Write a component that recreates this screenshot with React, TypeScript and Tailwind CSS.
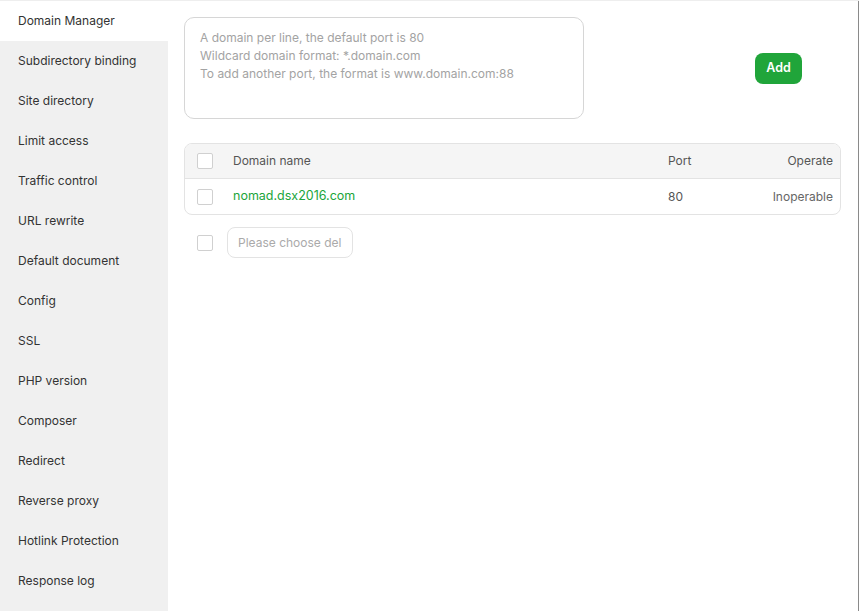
import React from "react";

// 站点设置弹窗 - 域名管理页
const menu = [
  "Domain Manager",
  "Subdirectory binding",
  "Site directory",
  "Limit access",
  "Traffic control",
  "URL rewrite",
  "Default document",
  "Config",
  "SSL",
  "PHP version",
  "Composer",
  "Redirect",
  "Reverse proxy",
  "Hotlink Protection",
  "Response log",
];

function Checkbox() {
  return <span className="block h-4 w-4 shrink-0 rounded-[2px] border border-[#d0d0d0] bg-white" />;
}

export default function App() {
  return (
    <div
      className="flex h-[611px] w-[859px] overflow-hidden border-t border-[#eeeeee] bg-white text-[12px] text-[#333]"
      style={{ fontFamily: "Inter, 'Noto Sans', sans-serif" }}
    >
      {/* 左侧菜单 */}
      <div className="flex w-[168px] shrink-0 flex-col bg-[#f0f0f0]">
        {menu.map((m, i) => (
          <div
            key={m}
            className={`flex h-10 shrink-0 items-center px-[18px] ${i === 0 ? "bg-white" : ""}`}
          >
            {m}
          </div>
        ))}
      </div>

      {/* 右侧内容 */}
      <div className="flex flex-1 flex-col border-r border-[#8a8a8a] pl-4 pt-4">
        <div className="flex items-center">
          <textarea
            className="h-[102px] w-[400px] resize-none rounded-[10px] border border-[#d6d6d6] px-[15px] pt-[11px] pb-[10px] text-[12px] leading-[18px] text-[#333] outline-none placeholder:text-[#a3a3a3]"
            placeholder={
              "A domain per line, the default port is 80\nWildcard domain format: *.domain.com\nTo add another port, the format is www.domain.com:88"
            }
          />
          <button className="ml-[171px] h-[31px] w-[47px] rounded-[8px] bg-[#20a53a] text-[12.5px] font-semibold text-white">
            Add
          </button>
        </div>

        <div className="mt-[24px] w-[657px] overflow-hidden rounded-[8px] border border-[#e3e3e3]">
          <div className="flex h-[35px] items-center border-b border-[#e3e3e3] bg-[#f5f5f5] pl-3 pr-[7px] text-[#555]">
            <Checkbox />
            <span className="ml-5 flex-1">Domain name</span>
            <span className="w-[95px]">Port</span>
            <span className="w-[70px] text-right">Operate</span>
          </div>
          <div className="flex h-[35px] items-center pl-3 pr-[7px]">
            <Checkbox />
            <span className="ml-5 flex-1 text-[12.5px] text-[#20a53a]">nomad.dsx2016.com</span>
            <span className="w-[95px] text-[#555]">80</span>
            <span className="w-[70px] text-right text-[#666]">Inoperable</span>
          </div>
        </div>

        <div className="mt-[12px] flex items-center pl-[13px]">
          <Checkbox />
          <button className="ml-[14px] h-[31px] w-[126px] rounded-[8px] border border-[#e3e3e3] pl-[10px] text-left text-[#aaa]">
            Please choose del
          </button>
        </div>
      </div>
    </div>
  );
}
